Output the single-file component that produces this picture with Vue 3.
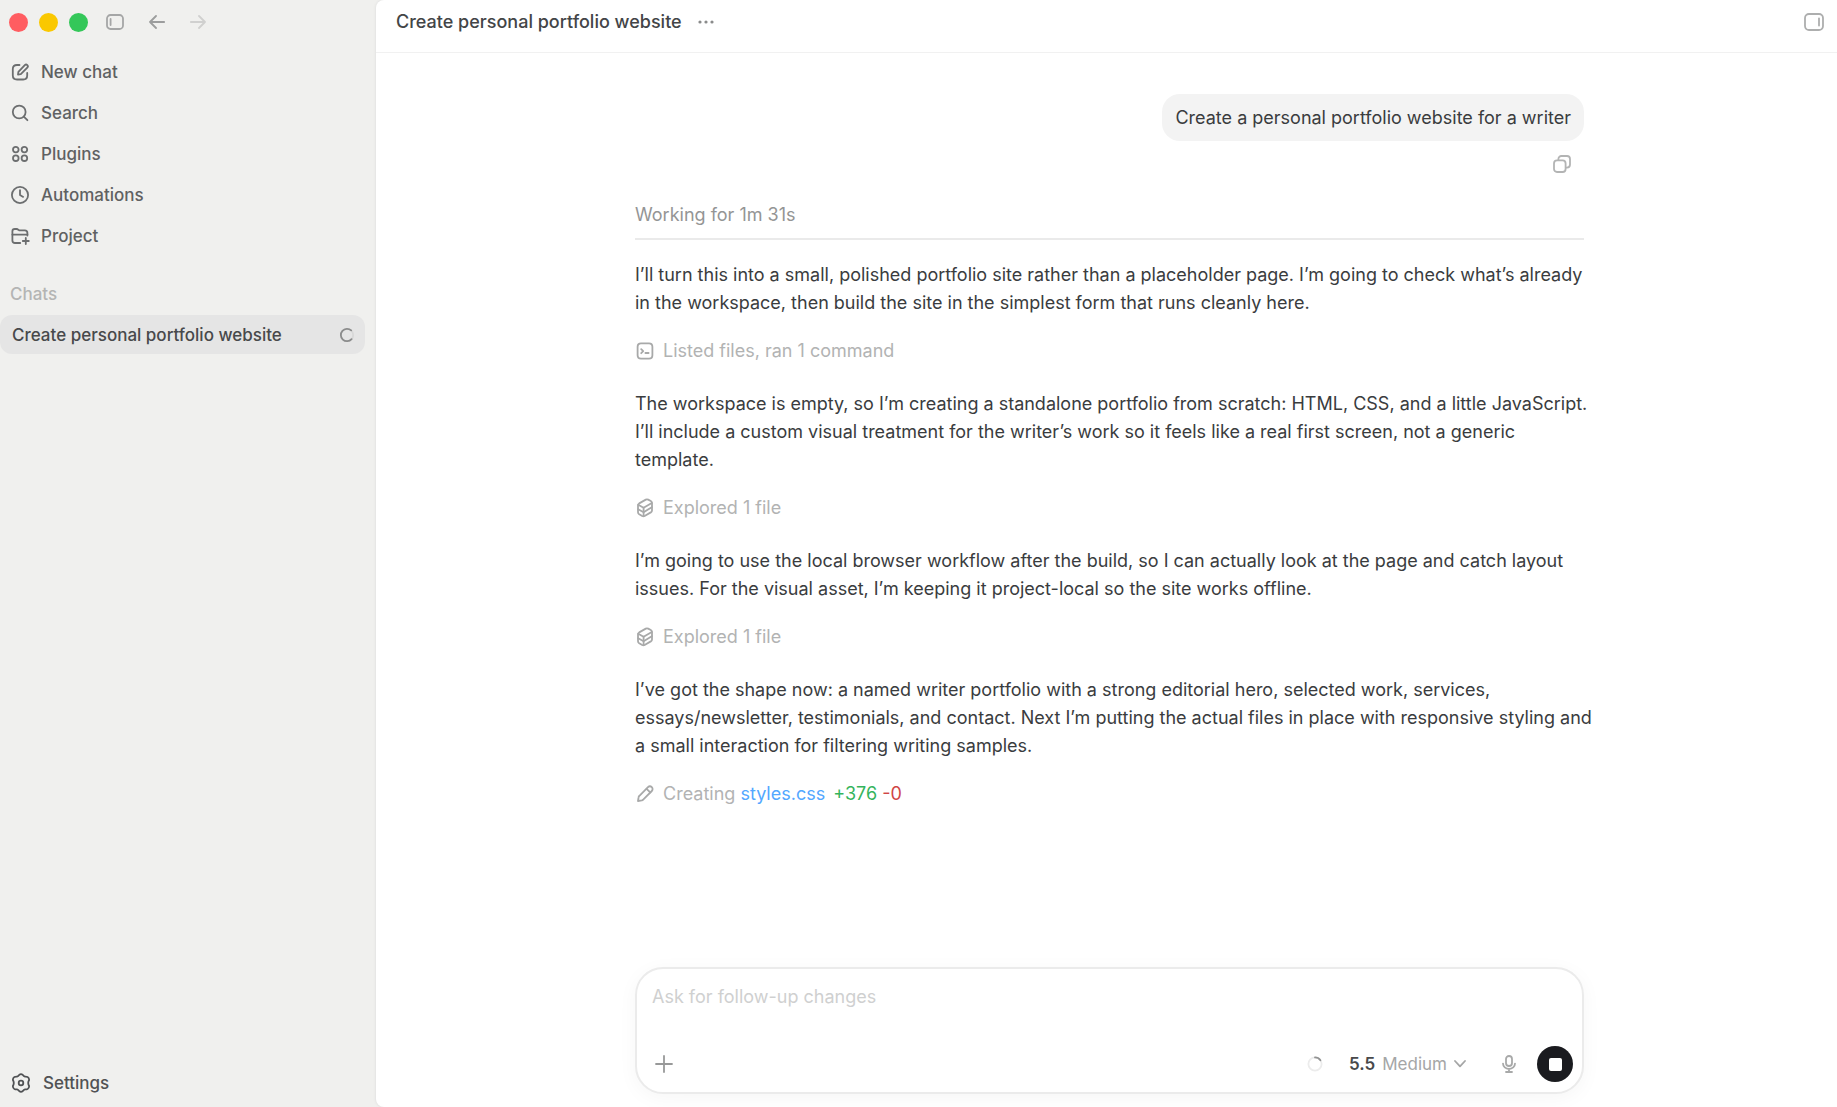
<template>
  <div class="app">
    <aside class="sidebar">
      <div class="window-bar">
        <span class="light red"></span>
        <span class="light yellow"></span>
        <span class="light green"></span>
        <button class="icon-btn toggle" aria-label="Toggle sidebar">
          <svg width="18" height="16" viewBox="0 0 18 16"><rect x="1" y="1" width="16" height="14" rx="3.5" /><path d="M4.6 5v6" /></svg>
        </button>
        <button class="icon-btn back" aria-label="Back">
          <svg width="16" height="14" viewBox="0 0 16 14"><path d="M15.2 7H1M7 1 1 7l6 6" /></svg>
        </button>
        <button class="icon-btn forward" aria-label="Forward">
          <svg width="16" height="14" viewBox="0 0 16 14"><path d="M.8 7H15M9 1l6 6-6 6" /></svg>
        </button>
      </div>

      <nav class="nav">
        <a v-for="item in navItems" :key="item.label" href="#" class="nav-item">
          <svg width="20" height="20" viewBox="0 0 20 20"><path v-for="d in item.paths" :key="d" :d="d" /></svg>
          <span>{{ item.label }}</span>
        </a>
      </nav>

      <h2 class="section-title">Chats</h2>
      <a href="#" class="chat-item">
        <span>{{ title }}</span>
        <svg width="16" height="16" viewBox="0 0 16 16"><circle cx="8" cy="8" r="6.2" class="ring" /><path d="M12.6 12.2A6.2 6.2 0 1 1 12.2 3.4" /></svg>
      </a>

      <a href="#" class="settings">
        <svg width="20" height="20" viewBox="0 0 20 20">
          <path d="M8.4 1.8Q10 .6 11.6 1.8Q12.8 3.4 14 3.6Q15.4 3.4 16.6 4Q18.2 4.9 18.1 7Q17.2 8.6 17.2 10Q17.2 11.4 18.1 13Q18.2 15.1 16.6 16Q15.4 16.6 14 16.4Q12.8 16.6 11.6 18.2Q10 19.4 8.4 18.2Q7.2 16.6 6 16.4Q4.6 16.6 3.4 16Q1.8 15.1 1.9 13Q2.8 11.4 2.8 10Q2.8 8.6 1.9 7Q1.8 4.9 3.4 4Q4.6 3.4 6 3.6Q7.2 3.4 8.4 1.8Z" />
          <circle cx="10" cy="10" r="2.3" />
        </svg>
        <span>Settings</span>
      </a>
    </aside>

    <main class="main">
      <header class="header">
        <h1>{{ title }}</h1>
        <button class="icon-btn more" aria-label="More">
          <svg width="16" height="4" viewBox="0 0 16 4"><circle cx="2" cy="2" r="1.6" /><circle cx="8" cy="2" r="1.6" /><circle cx="14" cy="2" r="1.6" /></svg>
        </button>
        <button class="icon-btn panel" aria-label="Toggle panel">
          <svg width="20" height="18" viewBox="0 0 20 18"><rect x="1" y="1" width="18" height="16" rx="4" /><path d="M15 5.5v7" /></svg>
        </button>
      </header>

      <div class="content">
        <section class="thread">
          <div class="bubble">Create a personal portfolio website for a writer</div>
          <button class="icon-btn copy" aria-label="Copy">
            <svg width="18" height="18" viewBox="0 0 18 18"><rect x="1" y="5.4" width="11.6" height="11.6" rx="3" /><path d="M5.4 5.2V4a3 3 0 0 1 3-3H14a3 3 0 0 1 3 3v5.6a3 3 0 0 1-3 3h-1.2" /></svg>
          </button>
          <div class="working">Working for 1m 31s</div>

          <template v-for="(step, i) in steps" :key="i">
            <p class="message">{{ step.text }}</p>
            <div class="activity">
              <svg width="20" height="20" viewBox="0 0 20 20"><path v-for="d in icons[step.icon]" :key="d" :d="d" /></svg>
              <span v-if="step.file">{{ step.label }} <a href="#" class="file">{{ step.file }}</a></span>
              <span v-else>{{ step.label }}</span>
              <span v-if="step.file" class="diff"><span class="added">{{ step.added }}</span> <span class="removed">{{ step.removed }}</span></span>
            </div>
          </template>
        </section>

        <form class="composer" @submit.prevent>
          <textarea v-model="draft" rows="1" aria-label="Message" placeholder="Ask for follow-up changes"></textarea>
          <div class="tools">
            <button type="button" class="icon-btn add" aria-label="Add">
              <svg width="18" height="18" viewBox="0 0 18 18"><path d="M9 1v16M1 9h16" /></svg>
            </button>
            <svg class="usage" width="16" height="16" viewBox="0 0 16 16"><circle cx="8" cy="8" r="6.6" class="ring" /><path d="M8 1.4A6.6 6.6 0 0 1 13.4 4.2" /></svg>
            <button type="button" class="model">
              <strong>5.5</strong>
              <span>Medium</span>
              <svg width="12" height="8" viewBox="0 0 12 8"><path d="m1 1 5 5.4L11 1" /></svg>
            </button>
            <button type="button" class="icon-btn mic" aria-label="Dictate">
              <svg width="14" height="18" viewBox="0 0 14 18"><rect x="4" y="1" width="6" height="10" rx="3" /><path d="M1 8.6a6 5.4 0 0 0 12 0M7 14v3M4 17h6" /></svg>
            </button>
            <button type="button" class="stop" aria-label="Stop"><span></span></button>
          </div>
        </form>
      </div>
    </main>
  </div>
</template>

<script setup>
import { ref } from 'vue';

const title = 'Create personal portfolio website';
const draft = ref('');

const navItems = [
  {
    label: 'New chat',
    paths: [
      'M9.5 3H7Q2.8 3 2.8 7V13.5Q2.8 17.5 7 17.5H13.2Q17.2 17.5 17.2 13.5V11',
      'M8 12.6 8.4 9.8 14.8 3.2A1.7 1.7 0 0 1 17.3 5.7L10.8 12.2Z',
    ],
  },
  {
    label: 'Search',
    paths: ['M2.8 9a6.4 6.4 0 1 0 12.8 0a6.4 6.4 0 1 0-12.8 0', 'M13.8 13.6 17.4 17.2'],
  },
  {
    label: 'Plugins',
    paths: [
      'M3 5.6a2.8 2.8 0 1 0 5.6 0a2.8 2.8 0 1 0-5.6 0',
      'M11.6 5.6a2.8 2.8 0 1 0 5.6 0a2.8 2.8 0 1 0-5.6 0',
      'M3 14.2a2.8 2.8 0 1 0 5.6 0a2.8 2.8 0 1 0-5.6 0',
      'M11.6 14.2a2.8 2.8 0 1 0 5.6 0a2.8 2.8 0 1 0-5.6 0',
    ],
  },
  {
    label: 'Automations',
    paths: ['M1.9 10a8.1 8.1 0 1 0 16.2 0a8.1 8.1 0 1 0-16.2 0', 'M10 5.2V10L13.2 11.9'],
  },
  {
    label: 'Project',
    paths: [
      'M10.2 17H5Q2.4 17 2.4 14.4V5.2Q2.4 3 4.8 3H6.6Q7.6 3 8.4 3.8L9.2 4.4H14.8Q17.4 4.4 17.4 7V9.6',
      'M2.4 8.6H17.4',
      'M15.8 12V18M12.8 15H18.8',
    ],
  },
];

const icons = {
  terminal: [
    'M6 2.4H14Q17.4 2.4 17.4 5.8V14.2Q17.4 17.6 14 17.6H6Q2.6 17.6 2.6 14.2V5.8Q2.6 2.4 6 2.4Z',
    'M6.2 8.2 8.2 10.2 6.2 12.2',
    'M10.4 12H13.6',
  ],
  stack: [
    'M3 7.4Q3 6.2 4.2 5.4L10.8 1.6Q12 1 13.2 1.6L15.8 3Q17 3.7 17 5V12.4Q17 13.6 15.8 14.4L9.6 18Q8.4 18.6 7.2 18L4.2 16.2Q3 15.4 3 14.2Z',
    'M3.2 6.8 8.6 9.8 16.8 5',
    'M3.2 11.2 8.6 14.2 16.8 9.2',
    'M8.6 9.8V18.2',
  ],
  pencil: [
    'M3 17 3.6 13.2Q3.7 12.4 4.4 11.8L13 3.2A2.3 2.3 0 0 1 16.8 7L8.2 15.6Q7.6 16.2 6.8 16.4Z',
    'M11.6 4.8 15.2 8.4',
  ],
};

const steps = [
  {
    text: 'I’ll turn this into a small, polished portfolio site rather than a placeholder page. I’m going to check what’s already in the workspace, then build the site in the simplest form that runs cleanly here.',
    icon: 'terminal',
    label: 'Listed files, ran 1 command',
  },
  {
    text: 'The workspace is empty, so I’m creating a standalone portfolio from scratch: HTML, CSS, and a little JavaScript. I’ll include a custom visual treatment for the writer’s work so it feels like a real first screen, not a generic template.',
    icon: 'stack',
    label: 'Explored 1 file',
  },
  {
    text: 'I’m going to use the local browser workflow after the build, so I can actually look at the page and catch layout issues. For the visual asset, I’m keeping it project-local so the site works offline.',
    icon: 'stack',
    label: 'Explored 1 file',
  },
  {
    text: 'I’ve got the shape now: a named writer portfolio with a strong editorial hero, selected work, services, essays/newsletter, testimonials, and contact. Next I’m putting the actual files in place with responsive styling and a small interaction for filtering writing samples.',
    icon: 'pencil',
    label: 'Creating',
    file: 'styles.css',
    added: '+376',
    removed: '-0',
  },
];
</script>

<style>
body {
  margin: 0;
  background: #f0f0ee;
}
</style>

<style scoped>
.app {
  display: flex;
  min-height: 100vh;
  background: #f0f0ee;
  color: #3a3c3e;
  font-family: Inter, "Liberation Sans", sans-serif;
  font-size: 18px;
  line-height: 28px;
}
* {
  box-sizing: border-box;
}
svg {
  display: block;
  flex: none;
  fill: none;
  stroke: currentColor;
  stroke-width: 1.8;
  stroke-linecap: round;
  stroke-linejoin: round;
}
button {
  padding: 0;
  border: none;
  background: none;
  color: inherit;
  font: inherit;
  cursor: pointer;
}
a {
  color: inherit;
  text-decoration: none;
}
h1,
h2,
p {
  margin: 0;
  font-size: inherit;
  font-weight: 400;
}

/* sidebar */
.sidebar {
  display: flex;
  flex-direction: column;
  flex: none;
  width: 376px;
  font-size: 17px;
}
.window-bar {
  display: flex;
  align-items: center;
  height: 44px;
  padding-left: 9px;
}
.light {
  width: 19px;
  height: 19px;
  margin-right: 11px;
  border-radius: 50%;
}
.red {
  background: #ff5d61;
}
.yellow {
  background: #fac800;
}
.green {
  background: #34c759;
}
.toggle {
  margin-left: 7px;
  color: #a5a6a6;
}
.back {
  margin-left: 25px;
  color: #9c9d9d;
}
.forward {
  margin-left: 25px;
  color: #d0d0cf;
}
.nav {
  padding-top: 7px;
}
.nav-item {
  display: flex;
  align-items: center;
  gap: 11px;
  height: 41px;
  padding-left: 10px;
  color: #5f6162;
  font-weight: 500;
}
.nav-item svg {
  color: #6c6e6f;
}
.section-title {
  margin-top: 24px;
  padding-left: 10px;
  color: #b4b5b4;
  font-weight: 500;
}
.chat-item {
  display: flex;
  align-items: center;
  justify-content: space-between;
  height: 39px;
  margin: 7px 11px 0 0;
  padding: 0 10px 0 12px;
  border-radius: 12px;
  background: #e5e5e5;
  color: #48494b;
  font-weight: 500;
}
.chat-item svg {
  color: #8b8c8c;
}
.chat-item .ring {
  stroke: #d8d8d8;
}
.settings {
  display: flex;
  align-items: center;
  gap: 12px;
  margin-top: auto;
  padding: 0 11px 10px;
  color: #505254;
  font-weight: 500;
}

/* main panel */
.main {
  display: flex;
  flex-direction: column;
  flex: 1;
  min-width: 0;
  border-radius: 8px 0 0 8px;
  background: #fff;
  box-shadow: 0 0 2px 1px #e4e4e3;
}
.header {
  display: flex;
  align-items: center;
  height: 53px;
  padding: 0 13px 8px 20px;
  border-bottom: 1px solid #f1f1f1;
}
.header h1 {
  color: #434547;
  font-weight: 500;
}
.more {
  margin-left: 16px;
  color: #8a8b8b;
}
.more svg {
  fill: currentColor;
  stroke: none;
}
.panel {
  margin-left: auto;
  color: #adaeae;
}
.content {
  display: flex;
  flex-direction: column;
  flex: 1;
  padding: 41px 20px 13px 26px;
}
.thread,
.composer {
  width: 100%;
  max-width: 949px;
  margin: 0 auto;
}
.thread {
  display: flex;
  flex-direction: column;
}
.bubble {
  align-self: flex-end;
  padding: 10px 13px 9px;
  border-radius: 18px;
  background: #f3f3f3;
}
.copy {
  align-self: flex-end;
  margin: 14px 13px 0 0;
  color: #b3b4b4;
}
.working {
  margin-top: 28px;
  padding-bottom: 9px;
  border-bottom: 2px solid #eaeaea;
  color: #949595;
}
.message {
  margin: 21px -8px 0 0;
}
.activity {
  display: flex;
  align-items: center;
  gap: 8px;
  margin: 20px 0 4px;
  color: #b2b3b3;
}
.activity svg {
  color: #a8a9a9;
}
.file {
  color: #53a7ff;
}
.added {
  color: #34b45c;
}
.removed {
  color: #d04545;
}

/* composer */
.composer {
  margin-top: auto;
  padding: 14px 9px 10px 15px;
  border: 2px solid #ebebeb;
  border-radius: 28px;
  background: #fff;
  box-shadow: 0 4px 20px rgba(0, 0, 0, 0.04);
}
textarea {
  display: block;
  width: 100%;
  height: 28px;
  margin-bottom: 35px;
  padding: 0;
  border: none;
  outline: none;
  resize: none;
  background: none;
  color: inherit;
  font: inherit;
}
textarea::placeholder {
  color: #cfd0d0;
  opacity: 1;
}
.tools {
  display: flex;
  align-items: center;
  font-size: 17px;
}
.add {
  margin-left: 3px;
  color: #989999;
}
.usage {
  margin-left: auto;
  color: #929393;
}
.usage .ring {
  stroke: #ececec;
}
.model {
  display: flex;
  align-items: center;
  gap: 7px;
  margin-left: 26px;
  color: #a5a6a6;
}
.model strong {
  color: #48494b;
  font-weight: 600;
}
.mic {
  margin-left: 36px;
  color: #a8a9a9;
}
.stop {
  display: flex;
  align-items: center;
  justify-content: center;
  width: 36px;
  height: 36px;
  margin-left: 21px;
  border-radius: 50%;
  background: #1a1b1f;
}
.stop span {
  width: 13px;
  height: 13px;
  border-radius: 2px;
  background: #fff;
}
</style>
